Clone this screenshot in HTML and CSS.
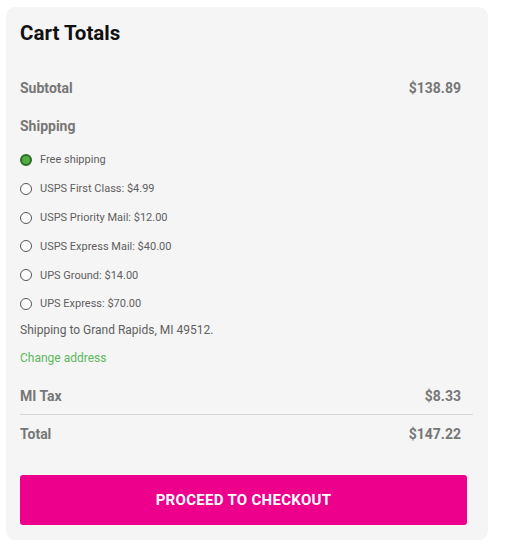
FILE: index.html
```html
<!DOCTYPE html>
<html lang="en">
<head>
<meta charset="utf-8">
<title>Cart Totals</title>
<link rel="stylesheet" href="styles.css">
</head>
<body>
<div class="card">
  <h2 class="title">Cart Totals</h2>
  <div class="row">
    <span class="label">Subtotal</span>
    <span class="value">$138.89</span>
  </div>
  <div class="ship-label">Shipping</div>
  <ul class="options">
    <li class="option"><span class="radio checked"></span><span>Free shipping</span></li>
    <li class="option"><span class="radio"></span><span>USPS First Class: $4.99</span></li>
    <li class="option"><span class="radio"></span><span>USPS Priority Mail: $12.00</span></li>
    <li class="option"><span class="radio"></span><span>USPS Express Mail: $40.00</span></li>
    <li class="option"><span class="radio"></span><span>UPS Ground: $14.00</span></li>
    <li class="option"><span class="radio"></span><span>UPS Express: $70.00</span></li>
  </ul>
  <p class="ship-to">Shipping to <strong>Grand Rapids, MI 49512</strong>.</p>
  <a class="change" href="#">Change address</a>
  <div class="row tax">
    <span class="label">MI Tax</span>
    <span class="value">$8.33</span>
  </div>
  <div class="row">
    <span class="label">Total</span>
    <span class="value">$147.22</span>
  </div>
  <button class="checkout">PROCEED TO CHECKOUT</button>
</div>
</body>
</html>
```

FILE: styles.css
```css
* { box-sizing: border-box; }
body {
  margin: 0;
  background: #ffffff;
  font-family: Roboto, "Liberation Sans", Arial, sans-serif;
}
.card {
  margin: 7px 0 0 6px;
  width: 482px;
  height: 533px;
  background: #f5f5f5;
  border-radius: 9px;
  padding: 14px 21px 15px 14px;
  display: flex;
  flex-direction: column;
}
.title {
  margin: 0;
  height: 24px;
  line-height: 24px;
  font-size: 20.5px;
  font-weight: 700;
  color: #111111;
}
.row {
  display: flex;
  justify-content: space-between;
  align-items: center;
  height: 38px;
  padding-right: 6px;
  font-size: 14px;
  font-weight: 700;
  color: #777777;
  flex: none;
}
.title + .row { margin-top: 24px; }
.tax {
  margin-top: 8px;
  border-bottom: 1px solid #d8d8d8;
  margin-right: -6px;
  padding-right: 12px;
}
.ship-label {
  height: 38.6px;
  line-height: 38px;
  font-size: 14px;
  font-weight: 700;
  color: #777777;
  flex: none;
}
.options {
  list-style: none;
  margin: 0;
  padding: 0;
  flex: none;
}
.option {
  height: 28.8px;
  display: flex;
  align-items: center;
  gap: 8px;
  font-size: 11px;
  font-weight: 400;
  color: #5f5f5f;
}
.radio {
  width: 12px;
  height: 12px;
  border-radius: 50%;
  border: 1px solid #555555;
  background: #ffffff;
  flex: none;
}
.radio.checked {
  border: 2px solid #2f6b2a;
  background: #52ad42;
}
.ship-to {
  margin: 1px 0 0;
  height: 23px;
  line-height: 23px;
  font-size: 12px;
  font-weight: 400;
  color: #5f5f5f;
  flex: none;
}
.ship-to strong { font-weight: 400; }
.change {
  margin-top: 5px;
  height: 22px;
  line-height: 22px;
  font-size: 12px;
  color: #5cb85c;
  text-decoration: none;
  flex: none;
}
.checkout {
  margin-top: 22px;
  height: 50px;
  width: 447px;
  border: none;
  border-radius: 3px;
  background: #ec008c;
  color: #ffffff;
  font-family: Roboto, "Liberation Sans", Arial, sans-serif;
  font-size: 15px;
  font-weight: 700;
  letter-spacing: 0.3px;
  flex: none;
}
```
